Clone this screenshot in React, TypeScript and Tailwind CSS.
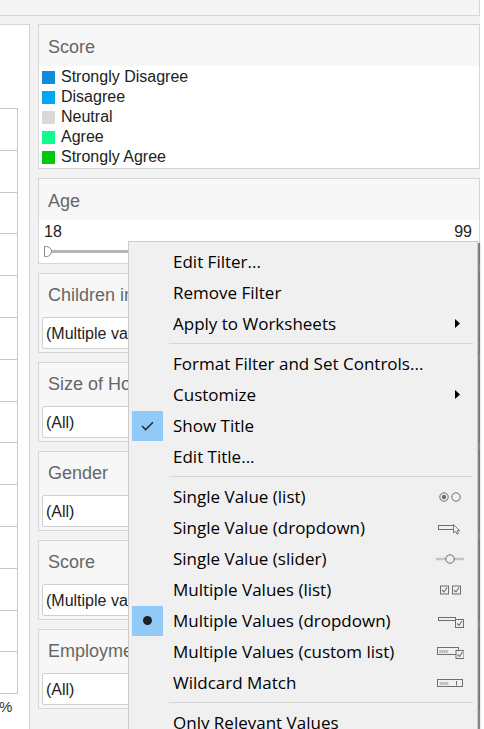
import React from 'react';

type Item =
  | { t: string; sub?: boolean; check?: boolean; bullet?: boolean; icon?: string }
  | 'sep';

const items: Item[] = [
  { t: 'Edit Filter...' },
  { t: 'Remove Filter' },
  { t: 'Apply to Worksheets', sub: true },
  'sep',
  { t: 'Format Filter and Set Controls...' },
  { t: 'Customize', sub: true },
  { t: 'Show Title', check: true },
  { t: 'Edit Title...' },
  'sep',
  { t: 'Single Value (list)', icon: 'radio' },
  { t: 'Single Value (dropdown)', icon: 'dropdown' },
  { t: 'Single Value (slider)', icon: 'slider' },
  { t: 'Multiple Values (list)', icon: 'checks' },
  { t: 'Multiple Values (dropdown)', icon: 'mdropdown', bullet: true },
  { t: 'Multiple Values (custom list)', icon: 'custom' },
  { t: 'Wildcard Match', icon: 'wildcard' },
  'sep',
  { t: 'Only Relevant Values' },
];

const C = '#6e6e6e';

function Check({ x, y }: { x: number; y: number }) {
  return (
    <>
      <rect x={x + 0.5} y={y + 0.5} width={8} height={8} fill="#f0f0f0" stroke={C} strokeWidth={1} />
      <path d={`M${x + 2} ${y + 4.5} L${x + 4} ${y + 6.5} L${x + 7} ${y + 2}`} fill="none" stroke={C} strokeWidth={1.1} />
    </>
  );
}

function MenuIcon({ kind }: { kind: string }) {
  return (
    <svg width="28" height="14" viewBox="0 0 28 14" className="block">
      {kind === 'radio' && (
        <>
          <circle cx={8} cy={7} r={4.2} fill="none" stroke={C} strokeWidth={1} />
          <circle cx={8} cy={7} r={2.2} fill={C} />
          <circle cx={20} cy={7} r={4.2} fill="none" stroke={C} strokeWidth={1} />
        </>
      )}
      {kind === 'dropdown' && (
        <>
          <rect x={2.5} y={4.5} width={16} height={4} fill="none" stroke={C} strokeWidth={1} />
          <path d="M17.5 3.5 L17.5 12 L19.6 10.2 L21 13.2 L22.3 12.6 L21 9.8 L23.8 9.8 Z" fill="#f0f0f0" stroke={C} strokeWidth={0.9} strokeLinejoin="round" />
        </>
      )}
      {kind === 'slider' && (
        <>
          <line x1={0} y1={7} x2={28} y2={7} stroke="#c4c4c4" strokeWidth={2.5} />
          <circle cx={14} cy={7} r={4.2} fill="#f0f0f0" stroke={C} strokeWidth={1} />
        </>
      )}
      {kind === 'checks' && (
        <>
          <Check x={4} y={2.5} />
          <Check x={16} y={2.5} />
        </>
      )}
      {kind === 'mdropdown' && (
        <>
          <rect x={2.5} y={3.5} width={17} height={3} fill="none" stroke={C} strokeWidth={1} />
          <Check x={19} y={5} />
        </>
      )}
      {kind === 'custom' && (
        <>
          <rect x={1.5} y={2.5} width={21} height={7} fill="none" stroke={C} strokeWidth={1} />
          <text x={3} y={8} fontSize={4.5} fill={C} fontFamily="Liberation Sans, sans-serif">xxxx</text>
          <Check x={19.5} y={5} />
        </>
      )}
      {kind === 'wildcard' && (
        <>
          <rect x={1.5} y={3.5} width={25} height={7} fill="none" stroke={C} strokeWidth={1} />
          <text x={3.5} y={9} fontSize={4.5} fill={C} fontFamily="Liberation Sans, sans-serif">xxxx</text>
          <line x1={20.5} y1={5} x2={20.5} y2={9.5} stroke={C} strokeWidth={1} />
        </>
      )}
    </svg>
  );
}

function Card({ title, children, titleH = 'h-[40px]' }: { title: string; children: React.ReactNode; titleH?: string }) {
  return (
    <div className="shrink-0 border border-[#d6d6d6] bg-[#f7f7f7]">
      <div className={`${titleH} flex items-center whitespace-nowrap pl-[9px] pt-[3px] text-[18px] text-[#666666]`}>{title}</div>
      {children}
    </div>
  );
}

function DropCard({ title, value }: { title: string; value: string }) {
  return (
    <Card title={title}>
      <div className="px-[3px] pb-[3px] pt-[3px]">
        <div className="flex h-[32px] items-center rounded-[2px] border border-[#d0d0d0] bg-white pl-[3px] pt-[2px] text-[16px] text-[#222]">
          {value}
        </div>
      </div>
    </Card>
  );
}

const legend = [
  ['Strongly Disagree', '#128bd8'],
  ['Disagree', '#02a6f6'],
  ['Neutral', '#dcd8d8'],
  ['Agree', '#14f98c'],
  ['Strongly Agree', '#01c80c'],
];

export default function App() {
  return (
    <div className="relative h-[729px] w-[484px] overflow-hidden bg-white font-['Liberation_Sans',Arial,sans-serif]">
      <div className="flex h-full w-[480px] flex-col bg-[#f2f2f2]">
        <div className="h-[16px] shrink-0 border-b border-r border-[#d6d6d6] bg-[#f5f5f5]" />
        <div className="flex min-h-0 flex-1 gap-[8px] pt-[8px]">
          <div className="w-[30px] shrink-0 border-r border-t border-[#d6d6d6] bg-white pt-[83px]">
            <div className="w-[18px] border-r border-t border-[#c8c8c8]">
              {Array.from({ length: 14 }).map((_, i) => (
                <div key={i} className="h-[41.8px] border-b border-[#c8c8c8]" />
              ))}
            </div>
            <div className="-ml-[1px] mt-[4px] text-[15px] leading-[17px] text-[#333]">%</div>
          </div>
          <div className="flex min-w-0 flex-1 flex-col gap-[9px]">
            <Card title="Score" titleH="h-[41px]">
              <div className="h-[102px] bg-white pl-[3px] pt-[1px]">
                {legend.map(([n, c]) => (
                  <div key={n} className="flex h-[20px] items-center gap-[6px] text-[16px] text-[#222]">
                    <div className="h-[13px] w-[13px]" style={{ backgroundColor: c }} />
                    <span>{n}</span>
                  </div>
                ))}
              </div>
            </Card>
            <Card title="Age" titleH="h-[41px]">
              <div className="h-[43px] bg-white pl-[5px] pr-[7px] pt-[2px]">
                <div className="flex h-[20px] items-center justify-between text-[16px] text-[#222]">
                  <span>18</span>
                  <span>99</span>
                </div>
                <div className="mt-[4px] flex h-[11px] items-center">
                  <div className="h-[11px] w-[8px] shrink-0 rounded-r-full border border-[#8a8a8a] bg-white" />
                  <div className="h-[3px] flex-1 bg-[#b4b4b4]" />
                </div>
              </div>
            </Card>
            <DropCard title="Children in Household" value="(Multiple values)" />
            <DropCard title="Size of Household" value="(All)" />
            <DropCard title="Gender" value="(All)" />
            <DropCard title="Score" value="(Multiple values)" />
            <DropCard title="Employment Status" value="(All)" />
          </div>
        </div>
      </div>

      <div className="absolute left-[128px] top-[241px] w-[350px] border border-[#cccccc] bg-[#f0f0f0] pt-[4px] font-['Open_Sans',sans-serif] text-[17px] text-black shadow-[2px_2px_1px_rgba(0,0,0,0.45)]">
        {items.map((it, i) =>
          it === 'sep' ? (
            <div key={i} className="flex h-[9px] items-center">
              <div className="ml-[40px] mr-[4px] h-px flex-1 bg-[#d5d5d5]" />
            </div>
          ) : (
            <div key={i} className="flex h-[31px] items-center">
              <div
                className={`ml-[3px] flex h-[30px] w-[31px] shrink-0 items-center justify-center ${
                  it.check || it.bullet ? 'bg-[#91c9f7]' : ''
                }`}
              >
                {it.check && (
                  <svg width="13" height="10" viewBox="0 0 13 10">
                    <path d="M1 5 L4.6 8.6 L12 1.2" fill="none" stroke="#2b2b2b" strokeWidth={1.5} />
                  </svg>
                )}
                {it.bullet && <div className="h-[9px] w-[9px] rounded-full bg-[#222]" />}
              </div>
              <span className="ml-[10px] whitespace-nowrap leading-none">{it.t}</span>
              {it.sub && (
                <svg width="5" height="9" viewBox="0 0 5 9" className="ml-auto mr-[17px]">
                  <path d="M0 0 L5 4.5 L0 9 Z" fill="#000" />
                </svg>
              )}
              {it.icon && (
                <div className="ml-auto mr-[13px]">
                  <MenuIcon kind={it.icon} />
                </div>
              )}
            </div>
          )
        )}
      </div>
    </div>
  );
}
